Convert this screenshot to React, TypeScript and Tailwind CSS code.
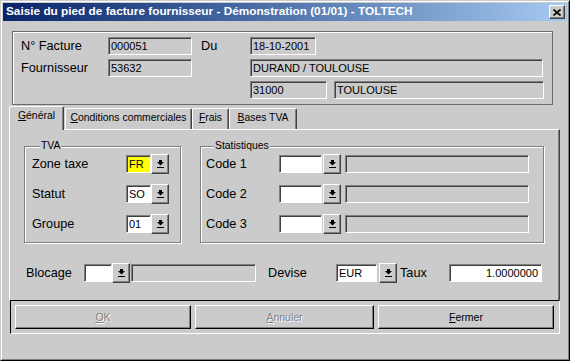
import React from "react";

const SANS = "font-['Liberation_Sans',Arial,sans-serif]";

const ArrowIcon = () => (
  <svg width="7" height="8" viewBox="0 0 7 8" className="block">
    <rect x="2" y="0" width="3" height="2" fill="#000" />
    <polygon points="0,2 7,2 3.5,5.5" fill="#000" />
    <rect x="0" y="7" width="7" height="1" fill="#000" />
  </svg>
);

const DropBtn = ({ className = "" }: { className?: string }) => (
  <div
    className={`flex h-[20px] w-[18px] shrink-0 items-center justify-center border border-t-white border-l-white border-r-[#404040] border-b-[#404040] bg-[#cbcbcb] shadow-[inset_-1px_-1px_0_#808080] ${className}`}
  >
    <ArrowIcon />
  </div>
);

// sunken edit field (Win2000 look)
const Field = ({
  className = "",
  children,
}: {
  className?: string;
  children?: React.ReactNode;
}) => (
  <div
    className={`flex h-[18px] shrink-0 items-center overflow-hidden border border-t-[#808080] border-l-[#808080] border-r-white border-b-white pl-[2px] text-[11px] leading-none text-black shadow-[inset_1px_1px_0_#404040] ${className}`}
  >
    {children}
  </div>
);

const Label = ({ className = "", children }: { className?: string; children: React.ReactNode }) => (
  <span className={`shrink-0 text-[12.7px] leading-none text-black ${className}`}>{children}</span>
);

const GroupBox = ({
  title,
  className = "",
  children,
}: {
  title: string;
  className?: string;
  children: React.ReactNode;
}) => (
  <div
    className={`flex flex-col border border-[#808080] shadow-[inset_1px_1px_0_#fff,1px_1px_0_#fff] ${className}`}
  >
    <span className="-mt-[7px] ml-[8px] w-fit bg-[#cbcbcb] px-px text-[10.4px] leading-[12px] text-black">
      {title}
    </span>
    {children}
  </div>
);

const Tab = ({
  active,
  className = "",
  children,
}: {
  active?: boolean;
  className?: string;
  children: React.ReactNode;
}) =>
  active ? (
    <div
      className={`relative z-10 -mb-px flex h-[24px] shrink-0 items-start justify-center rounded-t-[2px] border border-b-0 border-t-white border-l-white border-r-[#404040] bg-[#cbcbcb] pt-[4px] text-[10.4px] leading-none shadow-[inset_-1px_0_0_#808080] ${className}`}
    >
      {children}
    </div>
  ) : (
    <div
      className={`flex h-[21px] shrink-0 items-start justify-center rounded-t-[2px] border border-b-0 border-t-white border-l-white border-r-[#404040] bg-[#cbcbcb] pt-[4px] text-[10.4px] leading-none shadow-[inset_-1px_0_0_#808080] ${className}`}
    >
      {children}
    </div>
  );

const CodeRow = ({ n }: { n: number }) => (
  <div className="flex h-[20px] items-center">
    <Label className="w-[73px]">Code {n}</Label>
    <Field className="w-[43px] bg-white" />
    <DropBtn className="ml-px" />
    <Field className="ml-[4px] w-[184px] bg-[#cbcbcb]" />
  </div>
);

const PushBtn = ({
  className = "",
  disabled,
  children,
}: {
  className?: string;
  disabled?: boolean;
  children: React.ReactNode;
}) => (
  <div
    className={`flex h-[24px] shrink-0 items-center justify-center border border-t-white border-l-white border-r-black border-b-black bg-[#cbcbcb] text-[10.5px] leading-none shadow-[inset_-1px_-1px_0_#808080] ${
      disabled ? "text-[#808080] [text-shadow:1px_1px_0_#fff]" : "text-black"
    } ${className}`}
  >
    {children}
  </div>
);

export default function App() {
  return (
    <div className={`h-[361px] w-[570px] border border-t-[#cbcbcb] border-l-[#cbcbcb] border-r-black border-b-black bg-[#cbcbcb] ${SANS}`}>
      <div className="flex h-full flex-col border border-t-white border-l-white border-r-[#808080] border-b-[#808080] p-px">
        {/* title bar */}
        <div className="flex h-[18px] shrink-0 items-center bg-gradient-to-r from-[#0a246a] to-[#a6caf0] pl-[3px] pr-[2px]">
          <span className="flex-1 whitespace-nowrap text-[11.8px] font-bold leading-none text-white">
            Saisie du pied de facture fournisseur - Démonstration (01/01) - TOLTECH
          </span>
          <div className="flex h-[14px] w-[16px] items-center justify-center border border-t-white border-l-white border-r-[#404040] border-b-[#404040] bg-[#cbcbcb] shadow-[inset_-1px_-1px_0_#808080]">
            <svg width="8" height="7" viewBox="0 0 8 7">
              <path d="M0.5 0.5 L7.5 6.5 M7.5 0.5 L0.5 6.5" stroke="#000" strokeWidth="1.6" />
            </svg>
          </div>
        </div>

        <div className="flex flex-col pl-[6px]">
          {/* header box */}
          <div className="ml-[3px] mt-[10px] flex h-[74px] w-[541px] flex-col gap-[4px] border border-[#6b6b6b] pl-[8px] pt-[5px] shadow-[inset_1px_1px_0_#fff]">
            <div className="flex h-[18px] items-center">
              <Label className="w-[87px]">N° Facture</Label>
              <Field className="w-[84px]">000051</Field>
              <Label className="ml-[9px] w-[49px]">Du</Label>
              <Field className="w-[66px]">18-10-2001</Field>
            </div>
            <div className="flex h-[18px] items-center">
              <Label className="w-[87px]">Fournisseur</Label>
              <Field className="w-[84px]">53632</Field>
              <Field className="ml-[58px] w-[293px]">DURAND / TOULOUSE</Field>
            </div>
            <div className="flex h-[18px] items-center pl-[229px]">
              <Field className="w-[77px]">31000</Field>
              <Field className="ml-[7px] w-[210px]">TOULOUSE</Field>
            </div>
          </div>

          {/* tabs */}
          <div className="mt-px flex h-[23px] items-end">
            <Tab active className="w-[55px]">
              <span>
                <span className="underline">G</span>énéral
              </span>
            </Tab>
            <Tab className="ml-px w-[127px]">
              <span>
                <span className="underline">C</span>onditions commerciales
              </span>
            </Tab>
            <Tab className="w-[37px]">
              <span>
                <span className="underline">F</span>rais
              </span>
            </Tab>
            <Tab className="w-[68px]">
              <span>
                <span className="underline">B</span>ases TVA
              </span>
            </Tab>
          </div>

          {/* tab page */}
          <div className="flex h-[171px] w-[551px] flex-col border-l border-t border-r border-t-white border-l-white border-r-[#404040] pl-[14px] pt-[16px] shadow-[inset_-1px_0_0_#808080]">
            <div className="flex gap-[19px]">
              <GroupBox title="TVA" className="h-[97px] w-[157px] pl-[7px]">
                <div className="mt-[2px] flex flex-col gap-[10px]">
                  <div className="flex h-[20px] items-center">
                    <Label className="w-[94px]">Zone taxe</Label>
                    <Field className="w-[25px] bg-[#ffff00]">FR</Field>
                    <DropBtn />
                  </div>
                  <div className="flex h-[20px] items-center">
                    <Label className="w-[94px]">Statut</Label>
                    <Field className="w-[25px] bg-white">SO</Field>
                    <DropBtn />
                  </div>
                  <div className="flex h-[20px] items-center">
                    <Label className="w-[94px]">Groupe</Label>
                    <Field className="w-[25px] bg-white">01</Field>
                    <DropBtn />
                  </div>
                </div>
              </GroupBox>
              <GroupBox title="Statistiques" className="h-[97px] w-[344px] pl-[5px]">
                <div className="mt-[2px] flex flex-col gap-[10px]">
                  <CodeRow n={1} />
                  <CodeRow n={2} />
                  <CodeRow n={3} />
                </div>
              </GroupBox>
            </div>

            <div className="ml-[2px] mt-[20px] flex h-[20px] items-center">
              <Label className="w-[58px]">Blocage</Label>
              <Field className="w-[28px] bg-white" />
              <DropBtn />
              <Field className="ml-px w-[125px]" />
              <Label className="ml-[12px] w-[68px]">Devise</Label>
              <Field className="w-[41px] bg-white">EUR</Field>
              <DropBtn className="ml-[2px]" />
              <Label className="ml-[3px] w-[49px]">Taux</Label>
              <Field className="w-[93px] justify-end bg-white pr-[3px]">1.0000000</Field>
            </div>
          </div>

          {/* buttons */}
          <div className="ml-px flex h-[34px] w-[550px] gap-[4px] border border-t-black border-l-black border-r-white border-b-white pl-[4px] pt-[4px]">
            <PushBtn disabled className="w-[176px]">
              <span>
                <span className="underline">O</span>K
              </span>
            </PushBtn>
            <PushBtn disabled className="w-[179px]">
              <span>
                <span className="underline">A</span>nnuler
              </span>
            </PushBtn>
            <PushBtn className="w-[176px]">
              <span>
                <span className="underline">F</span>ermer
              </span>
            </PushBtn>
          </div>
        </div>
      </div>
    </div>
  );
}
